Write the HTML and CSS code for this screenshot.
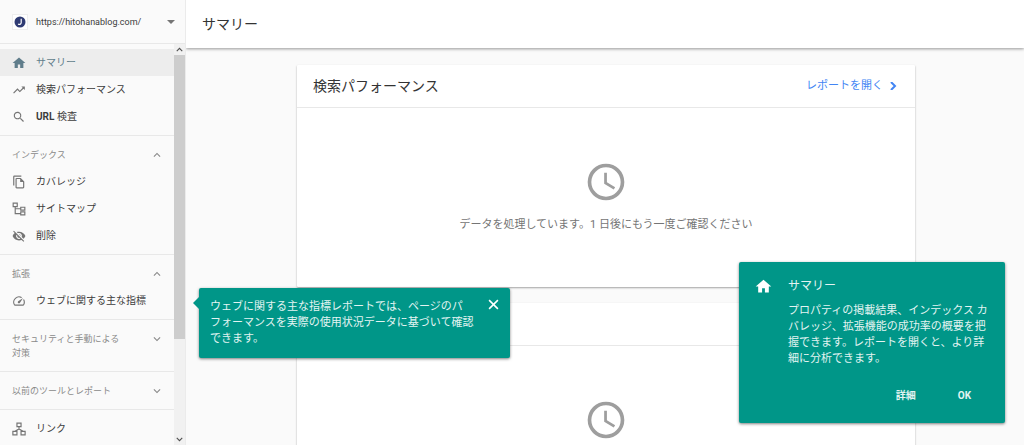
FILE: index.html
```html
<!DOCTYPE html>
<html lang="ja">
<head>
<meta charset="utf-8">
<meta name="viewport" content="width=device-width, initial-scale=1">
<title>サマリー</title>
<link rel="stylesheet" href="styles.css">
</head>
<body>
<svg class="sprite" aria-hidden="true">
  <symbol id="home" viewBox="0 0 24 24"><path d="M10 20.500v-6h4v6h5.500v-8.500H23L12 2.500 1 12h3.500v8.500z"/></symbol>
  <symbol id="clock" viewBox="0 0 24 24"><path d="M12 2a10 10 0 1 0 0 20 10 10 0 0 0 0-20zm0 18a8 8 0 1 1 0-16 8 8 0 0 1 0 16zm.5-13H11v6l5.2 3.1.8-1.2-4.500-2.700z"/></symbol>
  <symbol id="up" viewBox="0 0 24 24"><path d="M12 8l-6 6 1.400 1.400L12 10.800l4.600 4.600L18 14z"/></symbol>
  <symbol id="down" viewBox="0 0 24 24"><path d="M16.600 8.600L12 13.200 7.400 8.600 6 10l6 6 6-6z"/></symbol>
</svg>
<div class="app">
  <aside class="sidebar">
    <button class="property" type="button">
      <span class="favicon"><svg viewBox="0 0 12 12"><circle cx="6" cy="6" r="5.500" fill="#2f3b73"/><path d="M7.200 2.800v4a1.700 1.700 0 0 1-3 1" fill="none" stroke="#fff" stroke-width="1.200"/></svg></span>
      <span class="property-url">https://hitohanablog.com/</span>
      <svg class="caret" viewBox="0 0 8 4"><path d="M0 0h8L4 4z"/></svg>
    </button>
    <div class="scroller">
      <nav class="nav">
        <div class="group">
          <a class="item active" href="#"><svg class="icon"><use href="#home"/></svg>サマリー</a>
          <a class="item" href="#"><svg class="icon" viewBox="0 0 24 24"><path d="M16 6l2.300 2.300-4.900 4.900-4-4L2 16.600 3.400 18l6-6 4 4 6.300-6.300L22 12V6z"/></svg>検索パフォーマンス</a>
          <a class="item" href="#"><svg class="icon" viewBox="0 0 24 24"><path d="M15.500 14h-.8l-.3-.3A6.500 6.500 0 1 0 13.700 14.400l.3.3v.8l5 5 1.500-1.500zm-6 0a4.500 4.500 0 1 1 0-9 4.500 4.500 0 0 1 0 9z"/></svg><span><b class="latin">URL</b> 検査</span></a>
        </div>
        <div class="group">
          <button class="heading" type="button"><span>インデックス</span><svg class="chevron"><use href="#up"/></svg></button>
          <a class="item" href="#"><svg class="icon" viewBox="0 0 24 24"><path d="M16 1H4a2 2 0 0 0-2 2v15h2V3h12zm-1 4H8a2 2 0 0 0-2 2v14c0 1.100.9 2 2 2h11a2 2 0 0 0 2-2V11zM8 21V7h6v5h5v9z"/></svg>カバレッジ</a>
          <a class="item" href="#"><svg class="icon" viewBox="0 0 24 24"><g fill="none" stroke="currentColor" stroke-width="2"><path d="M2 2h7v6H2zM15 9h7v5h-7zM15 17h7v5h-7zM5.500 8v12H15M5.500 11.500H15"/></g></svg>サイトマップ</a>
          <a class="item" href="#"><svg class="icon" viewBox="0 0 24 24"><path d="M12 7a5 5 0 0 1 4.600 6.800l3 3A11.800 11.800 0 0 0 23 12c-1.700-4.400-6-7.500-11-7.500-1.400 0-2.700.2-4 .7l2.200 2.200C10.700 7.100 11.400 7 12 7zM2 4.300l2.700 2.700A11.800 11.800 0 0 0 1 12c1.700 4.400 6 7.500 11 7.500 1.500 0 3-.3 4.400-.8l3.300 3.300 1.300-1.300L3.300 3zM7.500 9.800l1.600 1.600A3 3 0 0 0 12.600 15l1.600 1.500A5 5 0 0 1 7.500 9.800zm4.300-.8l3.200 3.200V12a3 3 0 0 0-3.200-3z"/></svg>削除</a>
        </div>
        <div class="group">
          <button class="heading" type="button"><span>拡張</span><svg class="chevron"><use href="#up"/></svg></button>
          <a class="item" href="#"><svg class="icon" viewBox="0 0 24 24"><path d="M20.400 8.600l-1.200 1.800A8 8 0 0 1 19 18H5A8 8 0 0 1 15.600 6.800l1.800-1.200A10 10 0 0 0 3.400 19c.3.600 1 1 1.700 1H19c.7 0 1.300-.4 1.700-1a10 10 0 0 0-.3-10.400zm-9.800 6.800a2 2 0 0 0 2.800 0L19 7l-8.400 5.600a2 2 0 0 0 0 2.800z"/></svg>ウェブに関する主な指標</a>
        </div>
        <div class="group">
          <button class="heading" type="button"><span>セキュリティと手動による対策</span><svg class="chevron"><use href="#down"/></svg></button>
        </div>
        <div class="group">
          <button class="heading" type="button"><span>以前のツールとレポート</span><svg class="chevron"><use href="#down"/></svg></button>
        </div>
        <div class="group">
          <a class="item" href="#"><svg class="icon" viewBox="0 0 24 24"><g fill="none" stroke="currentColor" stroke-width="2"><path d="M8.500 2h7v6h-7zM1.500 16h7v6h-7zM15.500 16h7v6h-7zM12 8v4M5 16l7-4 7 4"/></g></svg>リンク</a>
        </div>
      </nav>
      <div class="scrollbar" aria-hidden="true">
        <svg class="arrow" viewBox="0 0 10 10"><path d="M2.500 6.500L5 4l2.500 2.500"/></svg>
        <div class="track"><div class="thumb"></div></div>
        <svg class="arrow" viewBox="0 0 10 10"><path d="M2.500 3.500L5 6l2.500-2.500"/></svg>
      </div>
    </div>
  </aside>
  <main class="main">
    <header class="topbar"><h1 class="page-title">サマリー</h1></header>
    <div class="content">
      <section class="card">
        <div class="card-head">
          <h2 class="card-title">検索パフォーマンス</h2>
          <a class="open" href="#">レポートを開く<svg class="open-arrow" viewBox="0 0 8 8"><path d="M2 0l4 4-4 4"/></svg></a>
        </div>
        <div class="card-body">
          <svg class="clock"><use href="#clock"/></svg>
          <p class="status">データを処理しています。1 日後にもう一度ご確認ください</p>
        </div>
      </section>
      <section class="card">
        <div class="card-head"></div>
        <div class="card-body"><svg class="clock"><use href="#clock"/></svg></div>
      </section>
    </div>
  </main>
  <div class="tip" role="note">
    <p class="tip-text">ウェブに関する主な指標レポートでは、ページのパ<br>フォーマンスを実際の使用状況データに基づいて確認<br>できます。</p>
    <button class="close" type="button" aria-label="閉じる"><svg class="close-icon" viewBox="0 0 10 10"><path d="M1 1l8 8M9 1L1 9"/></svg></button>
  </div>
  <div class="callout" role="dialog" aria-labelledby="callout-title">
    <svg class="callout-icon"><use href="#home"/></svg>
    <div class="callout-body">
      <h3 class="callout-title" id="callout-title">サマリー</h3>
      <p class="callout-text">プロパティの掲載結果、インデックス カ<br>バレッジ、拡張機能の成功率の概要を把<br>握できます。レポートを開くと、より詳<br>細に分析できます。</p>
      <div class="actions"><button class="action" type="button">詳細</button><button class="action" type="button">OK</button></div>
    </div>
  </div>
</div>
</body>
</html>
```
FILE: styles.css
```css
* { box-sizing: border-box; }
body {
  margin: 0;
  background: #fafafa;
  color: #3c3c3c;
  font: 10px/16px Roboto, "Noto Sans CJK JP", sans-serif;
}
h1, h2, h3, p { margin: 0; font-weight: 400; }
button { border: 0; padding: 0; background: none; color: inherit; font: inherit; text-align: left; cursor: pointer; }
a { color: inherit; text-decoration: none; }
svg { display: block; flex: none; fill: currentColor; }
.sprite { position: absolute; width: 0; height: 0; }

.app { position: relative; display: flex; height: 100vh; overflow: hidden; }

.sidebar { position: relative; z-index: 1; display: flex; flex-direction: column; flex: none; width: 186px; border-right: 1px solid #ebebeb; background: #fafafa; }
.property { display: flex; align-items: center; flex: none; height: 44px; padding: 0 10px 0 12px; border-bottom: 1px solid #e8e8e8; }
.favicon { display: grid; place-items: center; width: 16px; height: 16px; margin-right: 8px; border: 1px solid #eee; background: #fff; }
.favicon svg { width: 12px; height: 12px; }
.property-url { flex: 1; font-size: 9px; }
.caret { width: 8px; height: 4px; color: #757575; }

.scroller { display: flex; flex: 1; min-height: 0; }
.nav { flex: 1; min-width: 0; overflow: hidden; }
.group { padding: 5px 0; border-bottom: 1px solid #e8e8e8; }
.item { display: flex; align-items: center; height: 27px; padding-left: 12px; white-space: nowrap; }
.active { background: #ededed; color: #607d8b; }
.icon { width: 14px; height: 14px; margin-right: 10px; color: #757575; }
.active .icon { color: #607d8b; }
.latin { font-weight: 700; }
.heading { display: flex; justify-content: space-between; width: 100%; padding: 7px 10px 6px 12px; color: #8a8a8a; font-size: 9px; line-height: 14px; }
.heading span { max-width: 110px; }
.chevron { width: 14px; height: 14px; }

.scrollbar { display: flex; flex-direction: column; width: 11px; background: #f1f1f1; }
.arrow { width: 11px; height: 11px; fill: none; stroke: #505050; stroke-width: 1; }
.track { flex: 1; }
.thumb { height: 75%; background: #cdcdcd; }

.main { flex: 1; min-width: 0; }
.topbar { position: relative; display: flex; align-items: center; height: 48px; padding: 0 16px; background: #fff; box-shadow: 0 1px 3px rgba(0, 0, 0, .4); }
.page-title { font-size: 14px; line-height: 20px; color: #333; }
.content { display: flex; flex-direction: column; gap: 16px; padding: 17px 109px 0 111px; }
.card { min-height: 222px; background: #fff; border-radius: 1px; box-shadow: 0 1px 2px rgba(0, 0, 0, .35); }
.card-head { display: flex; align-items: center; justify-content: space-between; height: 43px; padding: 0 18px 0 16px; border-bottom: 1px solid #e8e8e8; }
.card-title { font-size: 14px; line-height: 20px; color: #333; }
.open { display: flex; align-items: center; gap: 6px; color: #4285f4; font-size: 11px; }
.open-arrow { width: 8px; height: 8px; fill: none; stroke: currentColor; stroke-width: 2; }
.card-body { display: flex; flex-direction: column; align-items: center; gap: 13px; padding-top: 52px; color: #9e9e9e; }
.clock { width: 44px; height: 44px; }
.status { color: #757575; font-size: 11px; }

.tip, .callout { position: absolute; background: #009688; border-radius: 2px; box-shadow: 0 1px 3px rgba(0, 0, 0, .5); color: #e3f4f2; font-size: 11px; }
.tip { left: 199px; top: 288px; display: flex; align-items: flex-start; justify-content: space-between; width: 311px; padding: 11px; }
.tip::before { content: ""; position: absolute; left: -6px; top: 9px; border: solid transparent; border-width: 6px 6px 6px 0; border-right-color: #009688; }
.tip-text, .callout-text { white-space: nowrap; }
.close { flex: none; color: #fff; }
.close-icon { width: 11px; height: 11px; fill: none; stroke: currentColor; stroke-width: 1.4; }
.callout { right: 19px; bottom: 22px; display: flex; gap: 16px; width: 266px; padding: 16px; }
.callout-icon { width: 17px; height: 17px; color: #fff; }
.callout-title { margin-bottom: 9px; font-size: 12px; }
.callout-body { flex: 1; }
.actions { display: flex; justify-content: flex-end; gap: 42px; padding: 21px 18px 3px 0; }
.action { font-size: 10px; font-weight: 700; }
```
